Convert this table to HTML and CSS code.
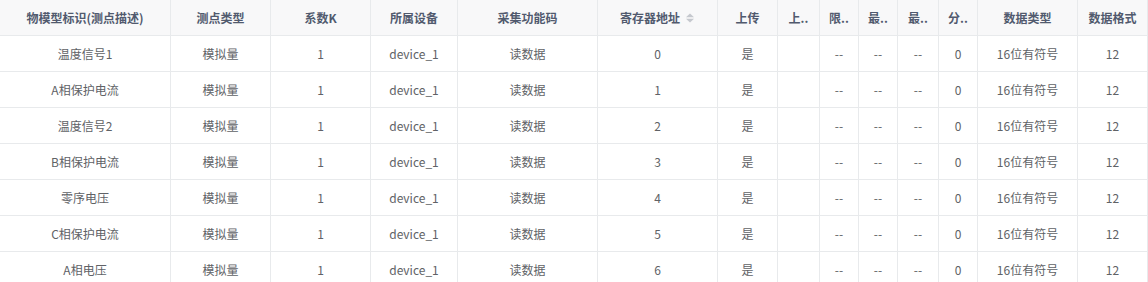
FILE: index.html
```html
<!DOCTYPE html>
<html lang="zh-CN">
<head>
<meta charset="utf-8">
<title>测点列表</title>
<link rel="stylesheet" href="styles.css">
</head>
<body>
<table class="grid">
  <colgroup>
    <col class="c-name"><col class="c-100"><col class="c-100"><col class="c-dev"><col class="c-func"><col class="c-reg"><col class="c-up"><col class="c-42"><col class="c-39"><col class="c-39"><col class="c-41"><col class="c-39"><col class="c-100"><col class="c-fmt">
  </colgroup>
  <thead>
    <tr>
      <th>物模型标识(测点描述)</th>
      <th>测点类型</th>
      <th>系数K</th>
      <th>所属设备</th>
      <th>采集功能码</th>
      <th><span class="sortable">寄存器地址<span class="sort"><svg width="10" height="10" viewBox="0 0 10 10"><path d="M5 0.5 L9 4.2 L1 4.2 Z" fill="#c5c8ce"/><path d="M5 9.5 L9 5.8 L1 5.8 Z" fill="#c5c8ce"/></svg></span></span></th>
      <th>上传</th>
      <th>上..</th>
      <th>限..</th>
      <th>最..</th>
      <th>最..</th>
      <th>分..</th>
      <th>数据类型</th>
      <th>数据格式</th>
    </tr>
  </thead>
  <tbody>
    <tr><td>温度信号1</td><td>模拟量</td><td>1</td><td>device_1</td><td>读数据</td><td>0</td><td>是</td><td></td><td>--</td><td>--</td><td>--</td><td>0</td><td>16位有符号</td><td>12</td></tr>
    <tr><td>A相保护电流</td><td>模拟量</td><td>1</td><td>device_1</td><td>读数据</td><td>1</td><td>是</td><td></td><td>--</td><td>--</td><td>--</td><td>0</td><td>16位有符号</td><td>12</td></tr>
    <tr><td>温度信号2</td><td>模拟量</td><td>1</td><td>device_1</td><td>读数据</td><td>2</td><td>是</td><td></td><td>--</td><td>--</td><td>--</td><td>0</td><td>16位有符号</td><td>12</td></tr>
    <tr><td>B相保护电流</td><td>模拟量</td><td>1</td><td>device_1</td><td>读数据</td><td>3</td><td>是</td><td></td><td>--</td><td>--</td><td>--</td><td>0</td><td>16位有符号</td><td>12</td></tr>
    <tr><td>零序电压</td><td>模拟量</td><td>1</td><td>device_1</td><td>读数据</td><td>4</td><td>是</td><td></td><td>--</td><td>--</td><td>--</td><td>0</td><td>16位有符号</td><td>12</td></tr>
    <tr><td>C相保护电流</td><td>模拟量</td><td>1</td><td>device_1</td><td>读数据</td><td>5</td><td>是</td><td></td><td>--</td><td>--</td><td>--</td><td>0</td><td>16位有符号</td><td>12</td></tr>
    <tr><td>A相电压</td><td>模拟量</td><td>1</td><td>device_1</td><td>读数据</td><td>6</td><td>是</td><td></td><td>--</td><td>--</td><td>--</td><td>0</td><td>16位有符号</td><td>12</td></tr>
  </tbody>
</table>
</body>
</html>
```

FILE: styles.css
```css
html, body {
  margin: 0;
  padding: 0;
  background: #ffffff;
}

body {
  font-family: "Noto Sans CJK SC", "Noto Sans", sans-serif;
  font-size: 12px;
  color: #606266;
  overflow: hidden;
}

.grid {
  table-layout: fixed;
  border-collapse: separate;
  border-spacing: 0;
  width: 1148px;
}

.c-name { width: 171px; }
.c-100 { width: 100px; }
.c-dev { width: 87px; }
.c-func { width: 140px; }
.c-reg { width: 120px; }
.c-up { width: 60px; }
.c-42 { width: 42px; }
.c-39 { width: 39px; }
.c-41 { width: 41px; }
.c-fmt { width: 70px; }

.grid th,
.grid td {
  box-sizing: border-box;
  border-right: 1px solid #e8eaec;
  border-bottom: 1px solid #e8eaec;
  padding: 0 4px;
  text-align: center;
  white-space: nowrap;
  overflow: hidden;
  line-height: 16px;
}

.grid th {
  height: 36px;
  background: #f8f8f9;
  color: #515a6e;
  font-weight: bold;
}

.grid td {
  height: 36px;
}

.sortable {
  display: inline-flex;
  align-items: center;
  gap: 5px;
}

.sort {
  display: inline-flex;
  width: 10px;
  height: 10px;
}
```
